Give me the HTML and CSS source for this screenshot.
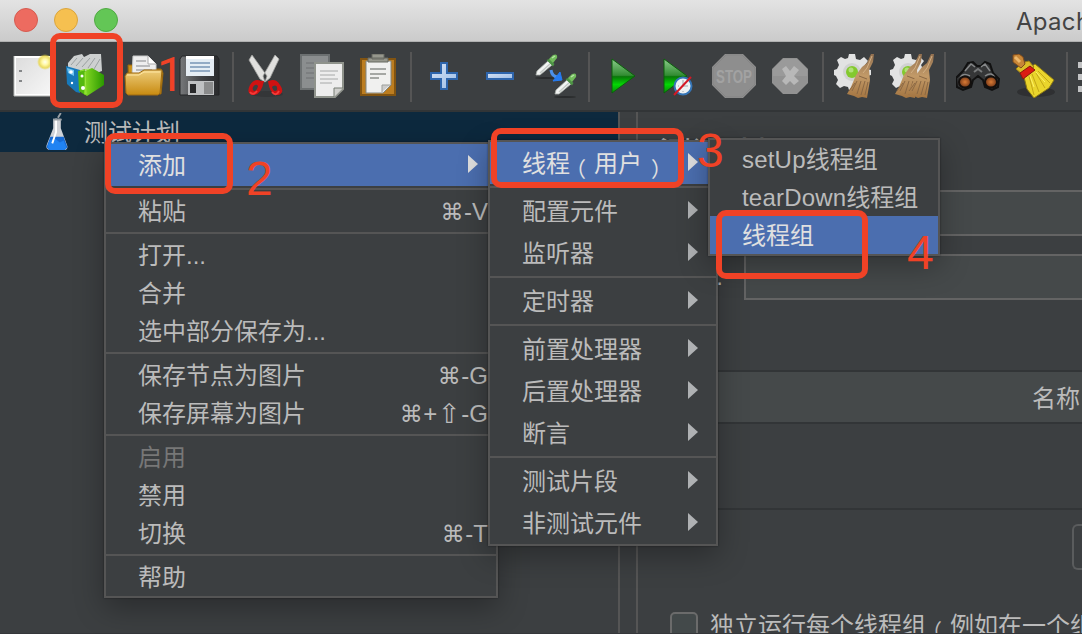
FILE: index.html
```html
<!DOCTYPE html>
<html lang="zh-CN">
<head>
<meta charset="utf-8">
<title>Apache JMeter</title>
<link rel="stylesheet" href="styles.css">
</head>
<body>
<svg class="defs" width="0" height="0">
  <defs>
    <linearGradient id="paper" x1="0" y1="0" x2="1" y2="1"><stop offset="0" stop-color="#dcdcdc"/><stop offset="1" stop-color="#f7f7f7"/></linearGradient>
    <linearGradient id="gold" x1="0" y1="0" x2="0" y2="1"><stop offset="0" stop-color="#edcd7b"/><stop offset="1" stop-color="#c88a10"/></linearGradient>
    <linearGradient id="play" x1="0" y1="0" x2="0" y2="1"><stop offset="0" stop-color="#8ccb8c"/><stop offset=".48" stop-color="#328c32"/><stop offset=".52" stop-color="#087808"/><stop offset=".75" stop-color="#04d604"/><stop offset="1" stop-color="#078c07"/></linearGradient>
    <linearGradient id="blue" x1="0" y1="0" x2="1" y2="1"><stop offset="0" stop-color="#d5e2f4"/><stop offset="1" stop-color="#9dbde6"/></linearGradient>
    <linearGradient id="green" x1="0" y1="0" x2="1" y2="0"><stop offset="0" stop-color="#88db24"/><stop offset="1" stop-color="#2a9800"/></linearGradient>
    <linearGradient id="metal" x1="0" y1="0" x2="1" y2="0"><stop offset="0" stop-color="#77797b"/><stop offset=".5" stop-color="#45474a"/><stop offset="1" stop-color="#292a2c"/></linearGradient>
    <linearGradient id="straw" x1="0" y1="0" x2="0" y2="1"><stop offset="0" stop-color="#927050"/><stop offset=".5" stop-color="#c29a68"/><stop offset="1" stop-color="#a47541"/></linearGradient>
    <radialGradient id="glow"><stop offset="0" stop-color="#fffff0"/><stop offset=".4" stop-color="#fff7a0"/><stop offset=".75" stop-color="#ead645" stop-opacity=".8"/><stop offset="1" stop-color="#e8d840" stop-opacity="0"/></radialGradient>
    <radialGradient id="lens"><stop offset="0" stop-color="#d97a34"/><stop offset="1" stop-color="#743818"/></radialGradient>
    <g id="gear">
      <path d="M15 0h6l1 5 4 1 4-3 4 4-3 4 2 4 4 1v5l-4 1-2 4 2 4-4 4-4-2-4 2-1 2h-5l-1-3-4-1-4 2-4-4 2-4-2-4-2-1v-5l3-1 2-4-2-5 4-3 4 2 3-1z" fill="#e2e3e3"/>
      <circle cx="18" cy="18" r="9" fill="#d1d2d2"/><circle cx="18" cy="18" r="6" fill="#83c92e"/><circle cx="17" cy="16" r="2.5" fill="#b0e078"/>
    </g>
    <g id="brush">
      <path d="M37 0h3l-1 8-4 8 1 10-3 18-5-1-4 1-4-2-7-2 4-7 5-12 6-8 5-4z" fill="url(#straw)"/>
      <path d="M25 22l8 3M23 27l-5 10M27 27l-4 13M31 27l-4 14M34 28l-3 13M21 29l-6 8" stroke="#8a6844" stroke-width="1" fill="none"/>
      <path d="M38 2l-5 12-4 5" stroke="#d3b084" fill="none"/>
    </g>
    <g id="dropper">
      <path d="M2 21l1-4L14 7l4 4L6 21z" fill="#f2f4f3" stroke="#a8aeaa" stroke-width=".8"/>
      <path d="M6 19L16 10" stroke="#c3c8c4" stroke-width="1.5"/>
      <path d="M12.500 6l3-1 5 5-1.500 2.500z" fill="#4c9344"/>
      <path d="M15 5l4-4q5-2 4 3l-4 5z" fill="#72bb5c"/>
      <path d="M18 4l3-2" stroke="#b4e5a5" stroke-width="1.5"/>
    </g>
  </defs>
</svg>
<div class="window">
  <header class="titlebar">
    <div class="lights"><i class="light close"></i><i class="light minimize"></i><i class="light zoom"></i></div>
    <span class="title">Apache JMeter</span>
  </header>

  <nav class="toolbar">
    <svg class="icon" viewBox="0 0 44 44"><path d="M5 3h37v38H5z" fill="url(#paper)" stroke="#fff" stroke-width="2"/><path d="M4 2v40h38" fill="none" stroke="#b8bbb9"/><path d="M9 17h3M9 27h3" stroke="#858789" stroke-width="2"/><circle cx="35" cy="8" r="8" fill="url(#glow)"/></svg>
    <svg class="icon" viewBox="0 0 44 44"><path d="M2 9l6-7 8-2 2 3 6-3h11l1 17-14 5-20-8z" fill="#cdd0d0"/><path d="M5 11l6-7M10 12l7-8M16 13l8-9M22 14l7-10M28 15l6-10" stroke="#9ba1a2" stroke-width="1"/><path d="M0 12l14 4v23l-4-1-9-8z" fill="#1779ba"/><path d="M1 14l7 2v6l-6-3z" fill="#70c4f2"/><path d="M12 17l7-2v26l-6-4z" fill="#54b810"/><path d="M19 17l7-3 12 7v10L21 42l-3-2z" fill="url(#green)"/><path d="M19 18l1 22M14 17l9-2" stroke="#a3ea48" stroke-width=".8"/><circle cx="5" cy="18" r="1.800" fill="#fff"/><circle cx="16" cy="22" r="1.500" fill="#fff"/><circle cx="17" cy="34" r="2" fill="#fff"/><circle cx="6" cy="29" r="1.200" fill="#fff"/></svg>
    <svg class="icon" viewBox="0 0 44 44"><path d="M6 11h6l4 4h23l2 4-2 21H7z" fill="#c98f15" stroke="#98650d"/><path d="M11 2h15l8 8v13H10z" fill="#eee" stroke="#c8caca"/><path d="M26 2v8h8" fill="#fff" stroke="#aaa"/><path d="M14 7h10M14 12h14M14 16h16" stroke="#85878a"/><path d="M3 22l2-3h12l5-3h18l-2 23-2 2H6l-2-2z" fill="url(#gold)" stroke="#9f6b12"/><path d="M5 21h12l5-3h16" fill="none" stroke="#ffe6a3"/></svg>
    <svg class="icon" viewBox="0 0 44 44"><path d="M4 2h35l2 3v36H2V5z" fill="url(#metal)" stroke="#252628"/><path d="M8 2h28v20H8z" fill="#e5edf4"/><path d="M8 2h28v3H8z" fill="#fff"/><path d="M12 9h20M12 13h20M12 17h20" stroke="#7895b5" stroke-width="1.300"/><path d="M10 27h26v14H10z" fill="#bfc1c3"/><path d="M12 30h6v9h-6z" fill="#28292b"/><path d="M26 28h9v12h-9z" fill="#8a8b8c"/></svg>
    <i class="divider"></i>
    <svg class="icon" viewBox="0 0 44 44"><ellipse cx="23" cy="40" rx="16" ry="3" fill="#2c2e2f" opacity=".5"/><path d="M8 1L5 6l11 19 5 3 2-6zM31 1l4 4-9 19-5 4-2-6z" fill="#e1e1df" stroke="#a3a4a2" stroke-width=".8"/><path d="M17 27q-7-3-11 4-4 8 2 10 9 1 12-14l4 0q2 15 11 14 6-3 1-10-4-7-11-4z" fill="#d01212"/><path d="M9 33q3-4 5-1-1 5-4 5-2-1-1-4zM29 32q5-2 4 4-3 3-5-3z" fill="#3c3f41"/><path d="M6 38q3 4 7-1M28 38q4 5 7-1" fill="none" stroke="#f43a38" stroke-width="2"/></svg>
    <svg class="icon" viewBox="0 0 44 44"><path d="M1 1h28v34H1z" fill="#8b8e8f" stroke="#6c7071" stroke-width="2"/><path d="M6 9h17M6 14h17M6 19h17M6 24h17" stroke="#6e7172"/><path d="M15 9h28v26l-8 8H15z" fill="#ededed" stroke="#8f938c" stroke-width="2"/><path d="M20 17h18M20 21h15M20 25h18M20 29h12" stroke="#a6a8a8"/><path d="M34 43v-9h9" fill="#d0d0cd" stroke="#777c74"/></svg>
    <svg class="icon" viewBox="0 0 44 44"><path d="M5 5h34v36H5z" fill="#bc7d20" stroke="#825411" stroke-width="2"/><path d="M10 7h25v24l-8 8H10z" fill="#f0f0ef" stroke="#828680"/><path d="M12 4h20v4H12zM16 0h12v5H16z" fill="#96978d" stroke="#666961"/><path d="M14 15h16M14 20h16M14 24h9" stroke="#8c8e8c" stroke-width="1.500"/><path d="M26 38v-7h8" fill="#ccc" stroke="#9d9f9b"/></svg>
    <i class="divider"></i>
    <svg class="icon" viewBox="0 0 44 44"><path d="M19 9h6v10h10v6H25v10h-6V25H9v-6h10z" fill="url(#blue)" stroke="#2e65ac" stroke-width="2"/></svg>
    <svg class="icon" viewBox="0 0 44 44"><path d="M9 19h26v6H9z" fill="url(#blue)" stroke="#2e65ac" stroke-width="2"/></svg>
    <svg class="icon" viewBox="0 0 44 44"><ellipse cx="12" cy="24" rx="11" ry="1" fill="#2a2c2d"/><ellipse cx="31" cy="43" rx="11" ry="1" fill="#2a2c2d"/><use href="#dropper"/><use href="#dropper" x="19" y="19"/><path d="M17 16q1 7 7 7" fill="none" stroke="#4b91ec" stroke-width="3"/><path d="M26 18l2 8-9 1z" fill="#257cf3" stroke="#257cf3"/></svg>
    <i class="divider"></i>
    <svg class="icon" viewBox="0 0 44 44"><path d="M12 5l23 17-23 17z" fill="url(#play)" stroke="#0b610b"/></svg>
    <svg class="icon" viewBox="0 0 44 44"><path d="M8 5l23 17L8 39z" fill="url(#play)" stroke="#0b610b"/><circle cx="27" cy="32" r="8.500" fill="#edf1f3" stroke="#3575b7" stroke-width="2"/><path d="M27 26v6h5M22 32h1M27 38v-1" fill="none" stroke="#a0a5aa"/><path d="M18 41l17-18" stroke="#d41825" stroke-width="2"/></svg>
    <svg class="icon" viewBox="0 0 44 44"><path d="M13 0h18l13 13v18L31 44H13L0 31V13z" fill="#8e8e8e"/><path d="M14 1h16l13 13v16L30 43H14L1 30V14z" fill="none" stroke="#858585"/><text x="22" y="29" class="stop-text" textLength="36" lengthAdjust="spacingAndGlyphs">STOP</text></svg>
    <svg class="icon" viewBox="0 0 44 44"><path d="M15 4h14l11 11v14L29 40H15L4 29V15z" fill="#929292"/><path d="M15 5h14l10 10v7H5v-7z" fill="#9a9a9a"/><path d="M14 15l4-3 4 5 4-5 5 4-5 6 5 5-5 4-4-4-4 4-4-4 4-5z" fill="#b8b8b8"/></svg>
    <i class="divider"></i>
    <svg class="icon" viewBox="0 0 44 44"><use href="#gear"/><use href="#brush"/></svg>
    <svg class="icon" viewBox="0 0 44 44"><use href="#gear"/><use href="#brush" x="-8"/><use href="#brush" x="4"/></svg>
    <i class="divider"></i>
    <svg class="icon" viewBox="0 0 44 44"><path d="M12 9l5-1 4 4h4l4-4 5 2 3 9 6 6-1 8-6 3-7-3-2-7-5-4-5 4-2 7-8 3-6-3-1-9 7-7z" fill="#353637" stroke="#111" stroke-width="2"/><path d="M9 17l6-7 4 3M25 13l4-3 5 7M4 25q2-7 10-3M29 22q7-5 10 2" fill="none" stroke="#858788" stroke-width="1.500"/><ellipse cx="9" cy="28" rx="6" ry="5.500" fill="url(#lens)" stroke="#130f0d" stroke-width="2"/><ellipse cx="35" cy="28" rx="6" ry="5.500" fill="url(#lens)" stroke="#130f0d" stroke-width="2"/><path d="M18 18l4-3 4 3" stroke="#77797a" fill="none" stroke-width="2"/></svg>
    <svg class="icon" viewBox="0 0 44 44"><ellipse cx="24" cy="38" rx="19" ry="5" fill="#292b2c" opacity=".7"/><path d="M11 19l12-9 19 16-5 8-15 10-7-9z" fill="#ead52c" stroke="#8e7a12"/><path d="M17 22l5 19M20 20l7 18M24 19l9 15M26 17l12 12" stroke="#c4a816" fill="none"/><path d="M18 22l4 11M24 18l9 10" stroke="#fff269"/><path d="M4 15l4-4 5-3 4-1 5 6-11 8z" fill="#dabd27" stroke="#9b7c16"/><path d="M1 1l6-1 4 3 2 7-4 4-8-6z" fill="#c78637" stroke="#7f4b1c"/><path d="M3 3l5 5" stroke="#ecb86d" stroke-width="3"/><path d="M8 19l10-7 5 4-12 9z" fill="#dc1b13" stroke="#8b160d"/></svg>
    <i class="divider"></i>
    <svg class="icon" viewBox="0 0 44 44"><path d="M0 8h6v6H0zm0 12h6v6H0zm0 12h6v6H0z" fill="#c2c3c4"/></svg>
  </nav>

  <main class="workspace">
    <aside class="tree">
      <div class="tree-row">
        <svg class="flask" viewBox="0 0 24 40"><path d="M8 6h8v10l7 19q0 4-3 4H4q-4-1-3-5l7-18z" fill="#d0d3d8"/><path d="M5 25h14l4 11-3 3H4l-3-3z" fill="#176bd4"/><path d="M4 29l6-2 5 4 4-2 3 8-3 2H5l-3-3z" fill="#2083f2"/><path d="M11 6v14l-4 12" stroke="#fff" stroke-width="2" fill="none"/><path d="M13 5l3-5M8 7h9" stroke="#999fa4" stroke-width="2"/></svg>
        <span>测试计划</span>
      </div>
    </aside>
    <div class="splitter"></div>
    <section class="panel">
      <h1 class="panel-title">测试计划</h1>
      <div class="fields">
        <label class="field"><span>名称:</span><i class="input"></i></label>
        <label class="field"><span>注释:</span><i class="input"></i></label>
      </div>
      <div class="table">
        <div class="table-head">名称</div>
        <div class="table-body"></div>
      </div>
      <div class="button-row"><i class="button"></i></div>
      <div class="check-row"><i class="checkbox"></i><span>独立运行每个线程组<b class="paren open">（</b>例如在一个组运行结束后启动下一个</span></div>
    </section>
  </main>

  <div class="menu menu-context">
    <div class="item tall selected">添加<i class="arrow"></i></div>
    <hr>
    <div class="item">粘贴<span class="keys"><kbd>⌘</kbd>-V</span></div>
    <hr>
    <div class="item">打开...</div>
    <div class="item">合并</div>
    <div class="item">选中部分保存为...</div>
    <hr>
    <div class="item">保存节点为图片<span class="keys"><kbd>⌘</kbd>-G</span></div>
    <div class="item">保存屏幕为图片<span class="keys"><kbd>⌘</kbd>+<kbd class="shift">⇧</kbd>-G</span></div>
    <hr>
    <div class="item disabled">启用</div>
    <div class="item">禁用</div>
    <div class="item">切换<span class="keys"><kbd>⌘</kbd>-T</span></div>
    <hr>
    <div class="item">帮助</div>
  </div>

  <div class="menu menu-add">
    <div class="item tall selected"><span>线程<b class="paren open">（</b>用户<b class="paren close-paren">）</b></span><i class="arrow"></i></div>
    <hr>
    <div class="item tall">配置元件<i class="arrow"></i></div>
    <div class="item tall">监听器<i class="arrow"></i></div>
    <hr>
    <div class="item tall">定时器<i class="arrow"></i></div>
    <hr>
    <div class="item tall">前置处理器<i class="arrow"></i></div>
    <div class="item tall">后置处理器<i class="arrow"></i></div>
    <div class="item tall">断言<i class="arrow"></i></div>
    <hr>
    <div class="item tall">测试片段<i class="arrow"></i></div>
    <div class="item tall">非测试元件<i class="arrow"></i></div>
  </div>

  <div class="menu menu-threads">
    <div class="item"><span><span class="latin">setUp</span>线程组</span></div>
    <div class="item"><span><span class="latin">tearDown</span>线程组</span></div>
    <div class="item selected">线程组</div>
  </div>

  <i class="mark mark-1"></i><b class="step step-1">1</b>
  <i class="mark mark-2"></i><b class="step step-2">2</b>
  <i class="mark mark-3"></i><b class="step step-3">3</b>
  <i class="mark mark-4"></i><b class="step step-4">4</b>
</div>
</body>
</html>
```

FILE: styles.css
```css
* { box-sizing: border-box; }

body {
  margin: 0;
  background: #3c3f41;
  color: #bbb;
  font: 24px/38px "Liberation Sans", "Noto Sans CJK SC", sans-serif;
}

.defs { position: absolute; }

.window {
  position: relative;
  display: flex;
  flex-direction: column;
  width: 1082px;
  height: 634px;
  overflow: hidden;
}

.titlebar {
  display: flex;
  flex: 0 0 42px;
  justify-content: space-between;
  border-bottom: 1px solid #b0b1b1;
  background: linear-gradient(#e3e3e3, #cbcbcb);
}

.lights { display: flex; gap: 16px; padding: 8px 14px; }
.light { width: 24px; height: 24px; border: 1px solid; border-radius: 50%; }
.close { background: #ed6b60; border-color: #d65b50; }
.minimize { background: #f6c050; border-color: #dba53c; }
.zoom { background: #63c656; border-color: #50aa43; }

.title {
  width: 66px;
  height: 41px;
  padding-top: 2px;
  overflow: hidden;
  color: #444;
  font: 24px/39px Inter, sans-serif;
  letter-spacing: .3px;
  white-space: nowrap;
}

.toolbar {
  display: flex;
  flex: 0 0 70px;
  align-items: center;
  padding-left: 4px;
  border-bottom: 2px solid #323537;
  background: #3c3f41;
  overflow: hidden;
}

.icon { flex: none; width: 44px; height: 44px; margin: 0 6px; }
.divider { flex: none; width: 2px; height: 50px; margin: 2px 4px 0; background: #555; }

.stop-text {
  fill: #a2a2a2;
  font: bold 19px "Liberation Sans", sans-serif;
  text-anchor: middle;
}

.workspace { display: flex; flex: 1; min-height: 0; border-bottom: 1px solid #35373a; }
.tree { width: 618px; }
.tree-row {
  display: flex;
  align-items: center;
  gap: 15px;
  height: 40px;
  padding-left: 45px;
  background: #0d293e;
}
.flask { width: 24px; height: 38px; }
.tree-row span { padding-top: 2px; }
.splitter {
  width: 20px;
  border: solid #555;
  border-width: 0 2px;
}

.panel { flex: 1; min-width: 0; overflow: hidden; }
.panel-title { height: 78px; margin: 0; padding: 22px 0 0 21px; font-size: 32px; font-weight: 500; line-height: 40px; }
.fields { display: grid; gap: 18px; }
.field { display: flex; align-items: center; justify-content: flex-end; }
.input { width: 338px; height: 46px; margin-left: 21px; border: 2px solid #646464; border-right: 0; background: #45494a; }

.table { margin: 70px 0 0 32px; border: solid #323537; border-width: 2px 0; }
.table-head { height: 52px; padding-left: 362px; border-bottom: 2px solid #323537; background: #45494a; line-height: 54px; white-space: nowrap; }
.table-body { height: 84px; }

.button-row { display: flex; justify-content: flex-end; padding-top: 14px; }
.button { width: 10px; height: 46px; border: 2px solid #5a5c5d; border-right: 0; border-radius: 6px 0 0 6px; }
.check-row { display: flex; align-items: center; gap: 12px; height: 38px; margin-top: 37px; padding-left: 32px; white-space: nowrap; }
.checkbox { flex: none; width: 28px; height: 28px; border: 2px solid #6b6b6b; border-radius: 5px; background: #43494a; }

.menu {
  position: absolute;
  border: 2px solid #555;
  background: #3c3f41;
  box-shadow: 0 10px 28px rgba(0, 0, 0, .3), 0 0 2px rgba(0, 0, 0, .4);
}
.menu-context { left: 104px; top: 142px; width: 394px; }
.menu-add { left: 488px; top: 140px; width: 230px; }
.menu-threads { left: 708px; top: 138px; width: 232px; }

.menu hr { height: 2px; margin: 2px 0; border: 0; background: #555; }

.item {
  display: flex;
  align-items: center;
  justify-content: space-between;
  height: 38px;
  padding: 2px 8px 0 32px;
  white-space: nowrap;
}
.tall { height: 42px; padding-right: 18px; }
.selected { background: #4b6eaf; color: #e0e0e0; }
.disabled { color: #777; }

.arrow {
  width: 10px;
  height: 18px;
  margin-top: -4px;
  background: #afb1b3;
  clip-path: polygon(0 0, 100% 50%, 0 100%);
}
.selected .arrow { background: #dedede; }

.keys { display: flex; align-items: center; }
.keys kbd { width: 24px; font: 23px/36px "DejaVu Sans", sans-serif; text-align: center; }
.keys .shift { font-size: 27px; }
.latin { letter-spacing: .2px; }

.paren {
  display: inline-block;
  width: 24px;
  height: 24px;
  font: 21px/24px "Noto Sans CJK SC", sans-serif;
  text-align: center;
  vertical-align: -5px;
}
.open { text-indent: -13px; }
.close-paren { text-indent: 9px; }

.mark { position: absolute; border: 6px solid #f04226; border-radius: 10px; }
.mark-1 { left: 50px; top: 33px; width: 73px; height: 75px; }
.mark-2 { left: 105px; top: 133px; width: 128px; height: 61px; }
.mark-3 { left: 491px; top: 128px; width: 193px; height: 60px; }
.mark-4 { left: 716px; top: 210px; width: 152px; height: 69px; }

.step { position: absolute; color: #f04226; font: 48px/48px "Liberation Sans", sans-serif; }
.step-1 { left: 157px; top: 51px; font-family: Roboto, sans-serif; }
.step-2 { left: 246px; top: 155px; }
.step-3 { left: 697px; top: 127px; }
.step-4 { left: 907px; top: 229px; }
```
